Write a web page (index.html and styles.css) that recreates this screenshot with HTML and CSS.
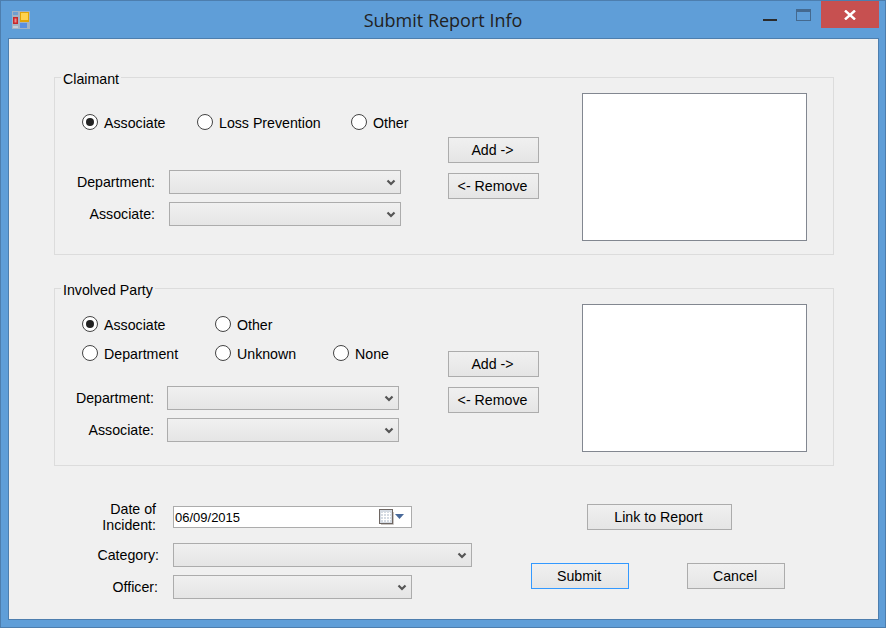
FILE: index.html
```html
<!DOCTYPE html>
<html lang="en">
<head>
    <meta charset="UTF-8">
    <meta name="viewport" content="width=device-width, initial-scale=1.0">
    <title>Submit Report Info</title>
    <link rel="stylesheet" href="styles.css">
</head>
<body>
    <svg class="defs" width="0" height="0">
        <symbol id="chevron" viewBox="0 0 12 8">
            <path d="M2.5 2.5 L6 6 L9.5 2.5" fill="none" stroke="#555" stroke-width="2.2"/>
        </symbol>
    </svg>
    <div class="window">
        <div class="titlebar">
            <svg class="app-icon" width="18" height="18" viewBox="0 0 18 18">
                <rect width="18" height="18" fill="#a3b3c4"/>
                <rect x="1" y="1" width="5" height="3" fill="#6f9fd0"/>
                <rect x="1" y="6" width="5" height="7" fill="#c8282a"/>
                <rect x="2.5" y="7.5" width="2" height="4" fill="#e88"/>
                <rect x="8" y="1" width="9" height="10" fill="#e0a408"/>
                <rect x="9" y="2" width="7" height="7" fill="#ffd24d"/>
                <rect x="8" y="12" width="7" height="5" fill="#5b8fe0"/>
                <rect x="1" y="15" width="5" height="2" fill="#c6ced6"/>
            </svg>
            <div class="title">Submit Report Info</div>
            <div class="min-btn"></div>
            <div class="max-btn"></div>
            <div class="close-btn">
                <svg width="12" height="10" viewBox="0 0 12 10">
                    <path d="M1 0.5 L11 9.5 M11 0.5 L1 9.5" stroke="#fff" stroke-width="2.4"/>
                </svg>
            </div>
        </div>

        <div class="client">
            <div class="group group-claimant">
                <span class="group-title">Claimant</span>
                <div class="group-left">
                    <div class="radios radios-claimant">
                        <label class="radio"><span class="dot checked"></span>Associate</label>
                        <label class="radio"><span class="dot"></span>Loss Prevention</label>
                        <label class="radio"><span class="dot"></span>Other</label>
                    </div>
                    <div class="fields">
                        <div class="field">
                            <span class="field-label">Department:</span>
                            <div class="combo"><svg class="chev"><use href="#chevron"/></svg></div>
                        </div>
                        <div class="field">
                            <span class="field-label">Associate:</span>
                            <div class="combo"><svg class="chev"><use href="#chevron"/></svg></div>
                        </div>
                    </div>
                </div>
                <div class="actions">
                    <button class="btn">Add -&gt;</button>
                    <button class="btn">&lt;- Remove</button>
                </div>
                <div class="listbox"></div>
            </div>

            <div class="group group-party">
                <span class="group-title">Involved Party</span>
                <div class="group-left">
                    <div class="radios radios-party">
                        <label class="radio"><span class="dot checked"></span>Associate</label>
                        <label class="radio"><span class="dot"></span>Other</label>
                        <span></span>
                        <label class="radio"><span class="dot"></span>Department</label>
                        <label class="radio"><span class="dot"></span>Unknown</label>
                        <label class="radio"><span class="dot"></span>None</label>
                    </div>
                    <div class="fields">
                        <div class="field">
                            <span class="field-label">Department:</span>
                            <div class="combo"><svg class="chev"><use href="#chevron"/></svg></div>
                        </div>
                        <div class="field">
                            <span class="field-label">Associate:</span>
                            <div class="combo"><svg class="chev"><use href="#chevron"/></svg></div>
                        </div>
                    </div>
                </div>
                <div class="actions">
                    <button class="btn">Add -&gt;</button>
                    <button class="btn">&lt;- Remove</button>
                </div>
                <div class="listbox"></div>
            </div>

            <div class="bottom">
                <div class="bottom-left">
                    <div class="bottom-row row-date">
                        <span class="bottom-label">Date of Incident:</span>
                        <div class="datebox">
                            <span class="date-value">06/09/2015</span>
                            <svg class="cal" width="15" height="16" viewBox="0 0 15 16">
                                <rect x="0.5" y="0.5" width="13" height="14" fill="#d5dbe3" stroke="#6e6662"/>
                                <path d="M2 4.5 H12 M2 7.5 H12 M2 10.5 H12 M4.5 3 V13 M7.5 3 V13 M10.5 3 V13" stroke="#fff" stroke-width="1"/>
                                <path d="M14.5 3 V15.5 H2" fill="none" stroke="#c9c5c2"/>
                            </svg>
                            <svg class="cal-arrow" width="10" height="6" viewBox="0 0 10 6">
                                <path d="M0 0 H9 L4.5 5 Z" fill="#48699a"/>
                            </svg>
                        </div>
                    </div>
                    <div class="bottom-row row-category">
                        <span class="bottom-label">Category:</span>
                        <div class="combo combo-wide"><svg class="chev"><use href="#chevron"/></svg></div>
                    </div>
                    <div class="bottom-row row-officer">
                        <span class="bottom-label">Officer:</span>
                        <div class="combo combo-mid"><svg class="chev"><use href="#chevron"/></svg></div>
                    </div>
                </div>
                <div class="bottom-right">
                    <button class="btn btn-link">Link to Report</button>
                    <div class="submit-row">
                        <button class="btn btn-main btn-default">Submit</button>
                        <button class="btn btn-main">Cancel</button>
                    </div>
                </div>
            </div>
        </div>
    </div>
</body>
</html>
```

FILE: styles.css
```css
* {
    box-sizing: border-box;
}
body {
    margin: 0;
    width: 886px;
    height: 628px;
    overflow: hidden;
    font-family: "Liberation Sans", Arial, sans-serif;
    font-size: 14.2px;
    color: #000;
}
.defs {
    position: absolute;
}
.window {
    width: 886px;
    height: 628px;
    background-color: #5f9ed8;
    border: 1px solid #4d7eae;
    display: flex;
    flex-direction: column;
}

/* title bar */
.titlebar {
    height: 37px;
    flex-shrink: 0;
    display: flex;
    align-items: flex-start;
    position: relative;
}
.app-icon {
    margin: 10px 0 0 11px;
}
.title {
    position: absolute;
    left: 0;
    right: 0;
    top: 8px;
    text-align: center;
    font-family: "Open Sans", sans-serif;
    font-size: 18px;
    line-height: 22px;
    color: #222;
}
.min-btn {
    width: 14px;
    height: 2px;
    background-color: #2b2b2b;
    margin: 18px 0 0 733px;
}
.max-btn {
    width: 15px;
    height: 12px;
    border: 1px solid #44698f;
    border-top-width: 3px;
    margin: 8px 0 0 19px;
}
.close-btn {
    width: 58px;
    height: 27px;
    background-color: #c75050;
    margin-left: 10px;
    display: flex;
    align-items: center;
    justify-content: center;
}

/* client area */
.client {
    flex: 1;
    margin: 0 6px 7px 7px;
    background-color: #f0f0f0;
    border: 1px solid #4d7eae;
    padding: 38px 44px 0 45px;
}

/* group boxes */
.group {
    position: relative;
    width: 780px;
    height: 178px;
    border: 1px solid #dcdcdc;
    display: flex;
}
.group-party {
    margin-top: 33px;
}
.group-title {
    position: absolute;
    top: -6px;
    left: 6px;
    padding: 0 2px;
    background-color: #f0f0f0;
    line-height: 15px;
}
.group-left {
    width: 393px;
    flex-shrink: 0;
}
.radios {
    display: grid;
    padding-left: 27px;
}
.radios-claimant {
    grid-template-columns: 115px 154px auto;
    padding-top: 34px;
}
.radios-party {
    grid-template-columns: 133px 118px auto;
    row-gap: 9px;
    padding-top: 25px;
}
.radio {
    display: flex;
    align-items: center;
    gap: 6px;
    height: 20px;
    padding-top: 2px;
}
.dot {
    width: 16px;
    height: 16px;
    margin-top: -2px;
    border: 1px solid #444;
    border-radius: 50%;
    background-color: #fff;
    flex-shrink: 0;
    position: relative;
}
.dot.checked::after {
    content: "";
    position: absolute;
    left: 3px;
    top: 3px;
    width: 8px;
    height: 8px;
    border-radius: 50%;
    background-color: #222;
}
.fields {
    display: flex;
    flex-direction: column;
    gap: 8px;
}
.group-claimant .fields {
    margin-top: 38px;
}
.group-party .fields {
    margin-top: 23px;
}
.field {
    display: flex;
    align-items: center;
}
.field-label {
    text-align: right;
}
.group-claimant .field-label {
    width: 100px;
    margin-right: 14px;
}
.group-party .field-label {
    width: 99px;
    margin-right: 13px;
}
.combo {
    width: 232px;
    height: 24px;
    border: 1px solid #acacac;
    background: linear-gradient(#f0f0f0, #e5e5e5);
    display: flex;
    align-items: center;
    justify-content: flex-end;
    padding-right: 3px;
}
.combo-wide {
    width: 299px;
}
.combo-mid {
    width: 239px;
}
.chev {
    width: 12px;
    height: 8px;
}

/* buttons */
.actions {
    width: 91px;
    flex-shrink: 0;
    display: flex;
    flex-direction: column;
    gap: 10px;
}
.group-claimant .actions {
    padding-top: 59px;
}
.group-party .actions {
    padding-top: 62px;
}
.btn {
    height: 26px;
    width: 91px;
    padding: 0 2px 0 0;
    border: 1px solid #acacac;
    background: linear-gradient(#f0f0f0, #e5e5e5);
    font-family: inherit;
    font-size: 14.2px;
    color: #000;
}
.btn-link {
    width: 145px;
    margin-left: 56px;
}
.btn-main {
    width: 98px;
}
.btn-default {
    border-color: #3399ff;
}
.listbox {
    width: 225px;
    height: 148px;
    margin: 15px 0 0 43px;
    background-color: #fff;
    border: 1px solid #828790;
}

/* bottom controls */
.bottom {
    display: flex;
    position: relative;
    margin-top: 35px;
}
.bottom-left {
    width: 477px;
    flex-shrink: 0;
}
.bottom-row {
    display: flex;
    align-items: center;
    margin-left: -1px;
}
.bottom-label {
    text-align: right;
    width: 103px;
}
.row-category {
    margin-top: 10px;
}
.row-officer {
    margin-top: 8px;
}
.row-date .bottom-label {
    margin-right: 17px;
}
.row-category .bottom-label {
    width: 106px;
    margin-right: 14px;
}
.row-officer .bottom-label {
    width: 105px;
    margin-right: 15px;
}
.datebox {
    width: 239px;
    height: 22px;
    background-color: #fff;
    border: 1px solid #acacac;
    display: flex;
    align-items: center;
    padding-left: 1px;
    font-size: 13px;
}
.date-value {
    flex: 1;
}
.cal-arrow {
    margin: 0 6px 0 1px;
}
.bottom-right {
    padding-top: 3px;
}
.submit-row {
    display: flex;
    gap: 58px;
    margin-top: 33px;
}
```
